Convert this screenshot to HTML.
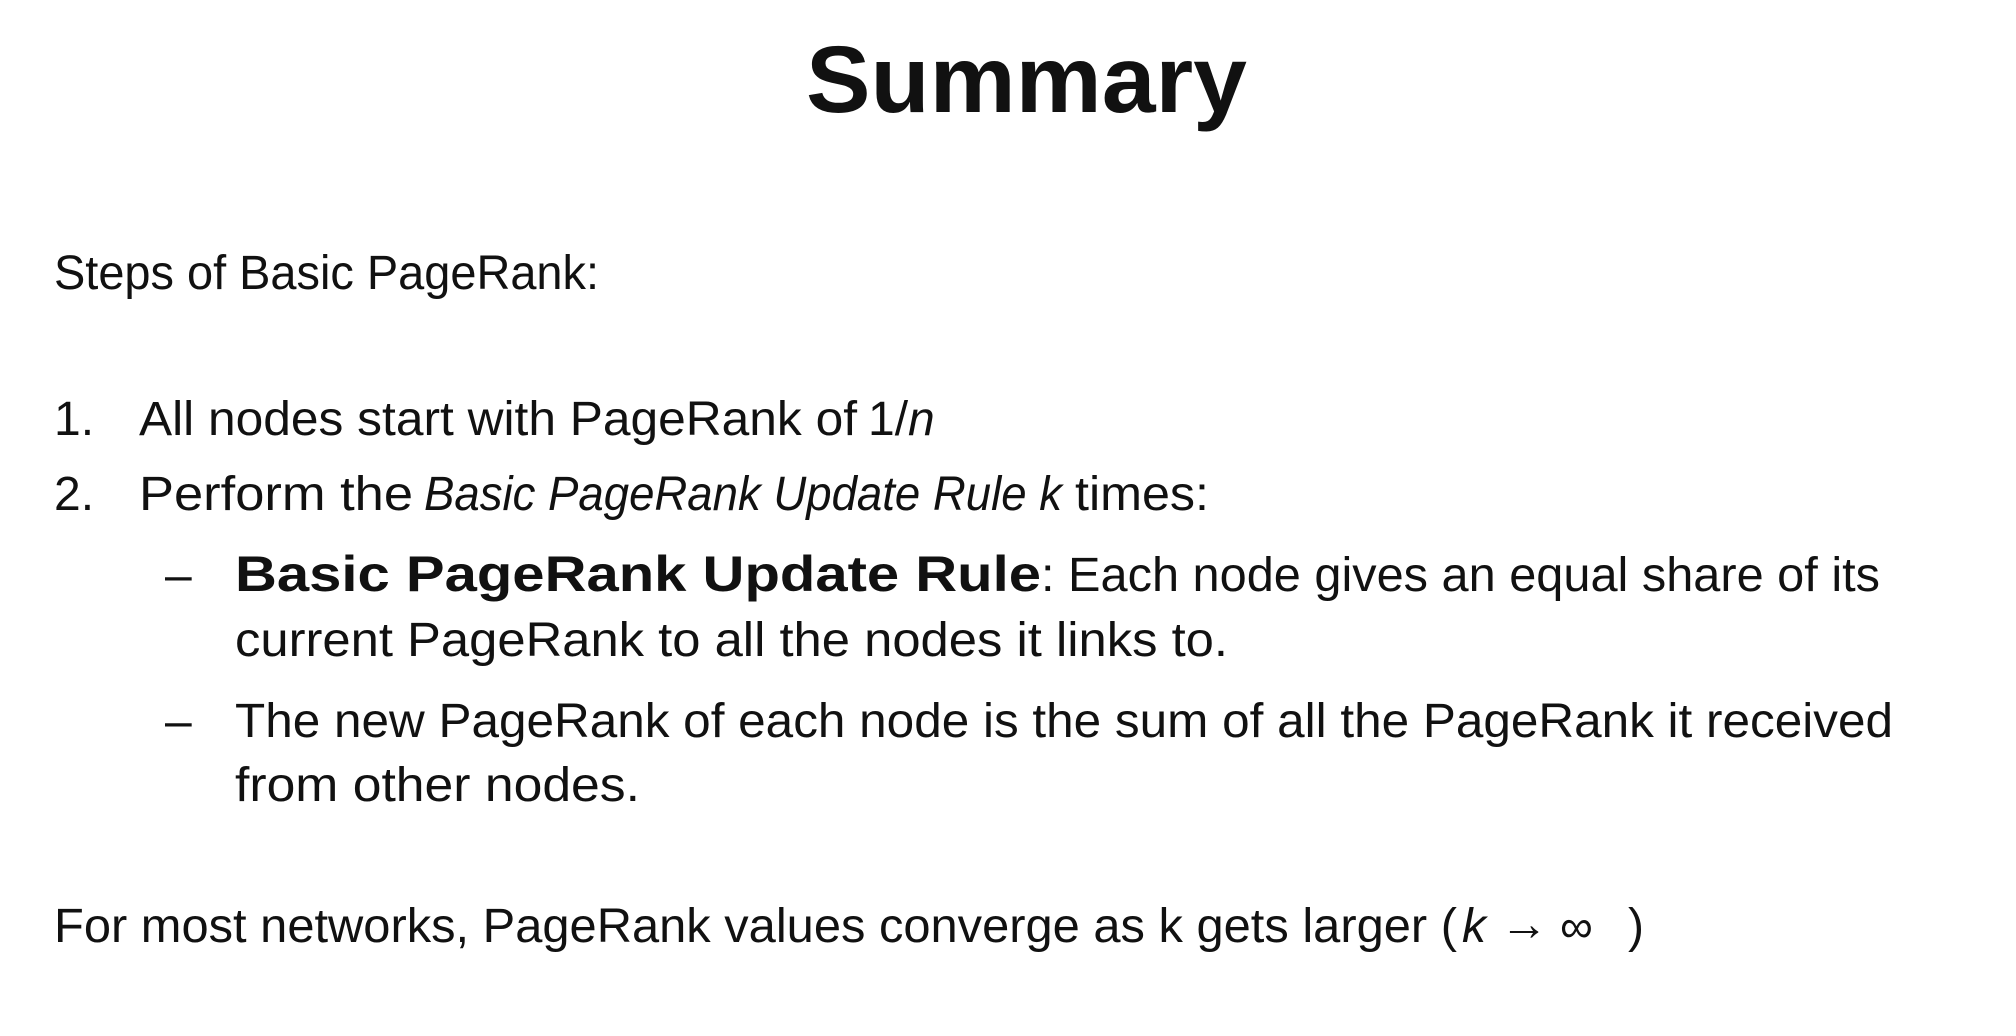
<!DOCTYPE html>
<html><head><meta charset="utf-8"><style>
html,body{margin:0;padding:0;background:#fff;}
svg{display:block}
text{font-family:"Liberation Sans",sans-serif;fill:#111;}
</style></head><body>
<svg width="2016" height="1036" viewBox="0 0 2016 1036" xmlns="http://www.w3.org/2000/svg">
<rect width="2016" height="1036" fill="#fff"/>
<text x="806" y="112" font-size="95" font-weight="bold" textLength="441" lengthAdjust="spacingAndGlyphs">Summary</text>
<g font-size="48">
<text x="54" y="289" textLength="545" lengthAdjust="spacingAndGlyphs">Steps of Basic PageRank:</text>
<text x="54" y="435">1.</text>
<text x="139" y="435" textLength="718" lengthAdjust="spacingAndGlyphs">All nodes start with PageRank of</text>
<text x="868" y="435" font-family="Liberation Serif">1/<tspan font-style="italic">n</tspan></text>
<text x="54" y="510">2.</text>
<text x="139" y="510" textLength="274" lengthAdjust="spacingAndGlyphs">Perform the</text>
<text x="424" y="510" font-style="italic" textLength="638" lengthAdjust="spacingAndGlyphs">Basic PageRank Update Rule k</text>
<text x="1075" y="510" textLength="134" lengthAdjust="spacingAndGlyphs">times:</text>
<text x="165" y="591">–</text>
<text x="235" y="591" font-weight="bold" font-size="50" textLength="806" lengthAdjust="spacingAndGlyphs">Basic PageRank Update Rule</text>
<text x="1041" y="591" textLength="839" lengthAdjust="spacingAndGlyphs">: Each node gives an equal share of its</text>
<text x="235" y="656" textLength="993" lengthAdjust="spacingAndGlyphs">current PageRank to all the nodes it links to.</text>
<text x="165" y="737">–</text>
<text x="235" y="737" textLength="1658" lengthAdjust="spacingAndGlyphs">The new PageRank of each node is the sum of all the PageRank it received</text>
<text x="235" y="801" textLength="405" lengthAdjust="spacingAndGlyphs">from other nodes.</text>
<text x="54" y="942" textLength="1403" lengthAdjust="spacingAndGlyphs">For most networks, PageRank values converge as k gets larger (</text>
<text x="1462" y="942" font-family="Liberation Serif" font-style="italic">k</text>
<text x="1500" y="940" font-family="DejaVu Sans" font-size="48">→</text>
<text x="1560" y="942" font-family="DejaVu Sans" font-size="46">∞</text>
<text x="1628" y="942">)</text>
</g>
</svg>
</body></html>
